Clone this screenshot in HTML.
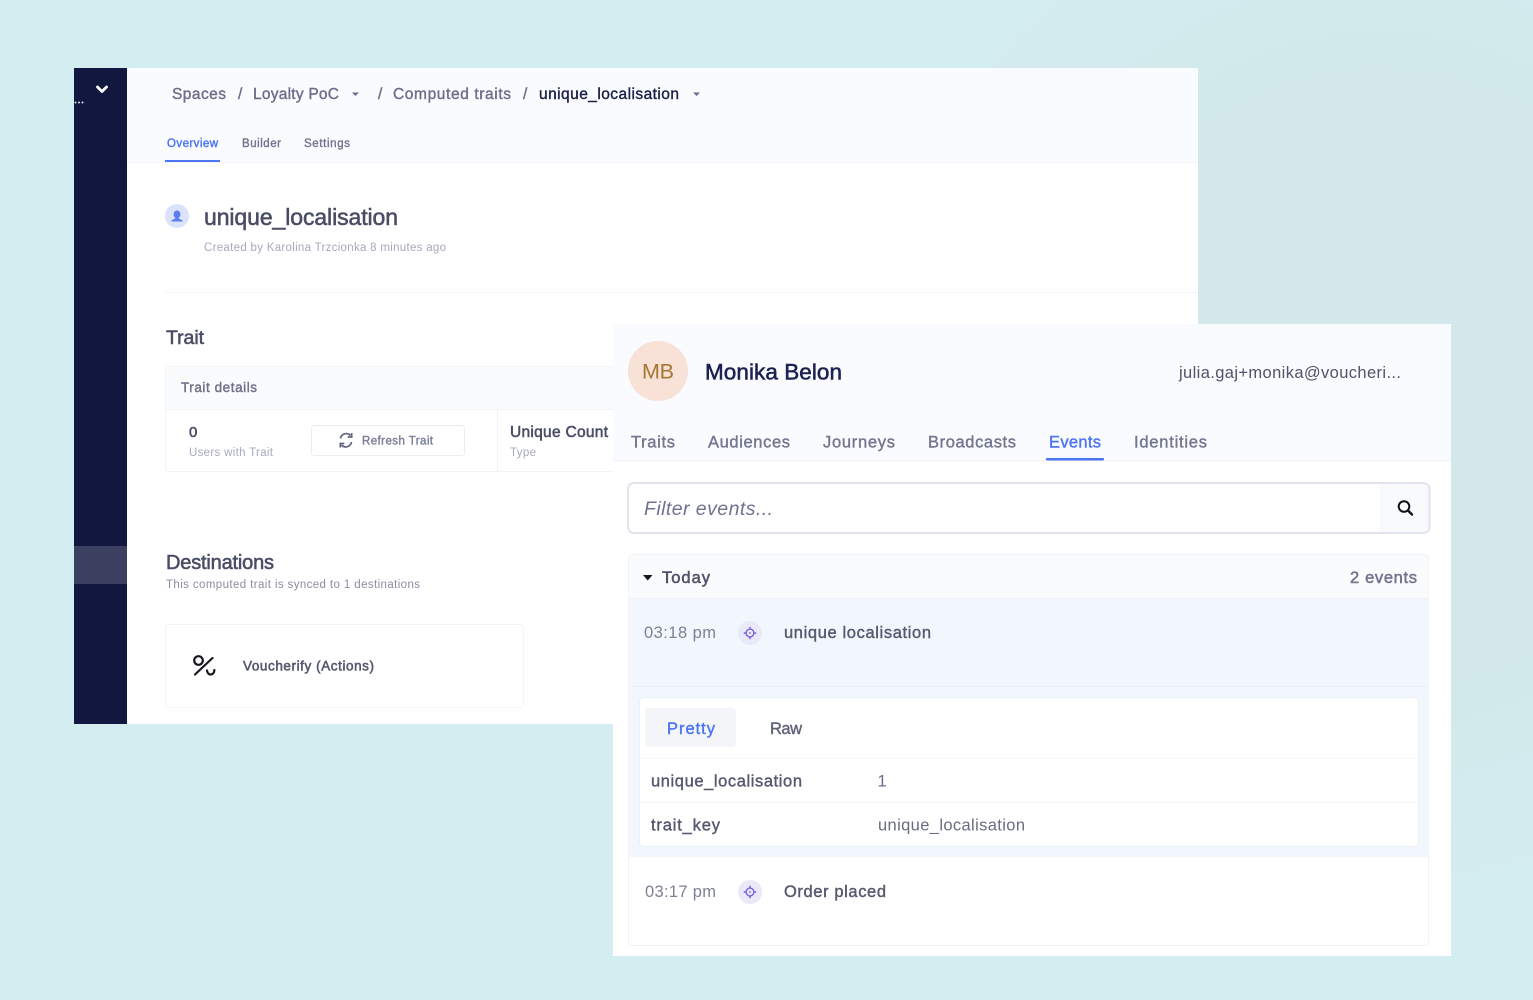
<!DOCTYPE html>
<html lang="en">
<head>
<meta charset="utf-8">
<title>Computed trait and customer events</title>
<style>
html,body{margin:0;padding:0;width:1533px;height:1000px;overflow:hidden;background:#d4edf1}
svg{display:block;position:absolute;left:0;top:0;filter:blur(.3px)}
text{font-family:"Liberation Sans",Arial,sans-serif;white-space:pre}
.m{stroke:currentColor;stroke-width:.4px}
.s{stroke:currentColor;stroke-width:.55px}
</style>
</head>
<body>
<svg width="1533" height="1000" viewBox="0 0 1533 1000" xmlns="http://www.w3.org/2000/svg">
<defs>
<radialGradient id="bg" cx="1380" cy="380" r="520" gradientUnits="userSpaceOnUse">
<stop offset="0" stop-color="#d2e8ea"/><stop offset=".55" stop-color="#d2e8ea"/><stop offset="1" stop-color="#d4edf1"/>
</radialGradient>
<g id="target" fill="none" stroke="#7a62dc" stroke-width="1.4">
<circle r="3.9"/><path d="M0-6.2V-3.6M0 3.6V6.2M-6.2 0H-3.6M3.6 0H6.2"/><circle r=".9" fill="#7a62dc" stroke="none"/>
</g>
</defs>

<rect width="1533" height="1000" fill="url(#bg)"/>

<!-- Back panel -->
<rect x="74" y="68" width="1124" height="656" fill="#fff"/>
<rect x="74" y="68" width="53" height="656" fill="#11173f"/>
<rect x="74" y="546" width="53" height="38" fill="#3c4060"/>
<path d="M97.500 87 102 91.500 106.500 87" fill="none" stroke="#fff" stroke-width="2.800" stroke-linecap="round" stroke-linejoin="round"/>
<g fill="#dfe1ea"><circle cx="75.500" cy="102.500" r="1"/><circle cx="79" cy="102.500" r="1"/><circle cx="82.500" cy="102.500" r="1"/></g>

<rect x="127" y="68" width="1071" height="94" fill="#f9fbfe"/>
<rect x="127" y="162" width="1071" height="1" fill="#f4f6f9"/>

<g font-size="15.500" fill="#6c6f8b" color="#6c6f8b">
<text class="m" x="172" y="99" textLength="54">Spaces</text>
<text class="m" x="238" y="99">/</text>
<text class="m" x="253" y="99" textLength="86">Loyalty PoC</text>
<path d="M352 92.500h7l-3.500 3.500z" stroke="none"/>
<text class="m" x="378" y="99">/</text>
<text class="m" x="393" y="99" textLength="118">Computed traits</text>
<text class="m" x="523" y="99">/</text>
</g>
<text class="m" x="539" y="99" font-size="15.500" fill="#1d2148" color="#1d2148" textLength="140">unique_localisation</text>
<path d="M693 92.500h7l-3.500 3.500z" fill="#6c6f8b"/>

<g font-size="11.500">
<text class="m" x="167" y="147" fill="#4c74f4" color="#4c74f4" textLength="51">Overview</text>
<text class="m" x="242" y="147" fill="#737690" color="#737690" textLength="39">Builder</text>
<text class="m" x="304" y="147" fill="#737690" color="#737690" textLength="46">Settings</text>
</g>
<rect x="165" y="160" width="55" height="2" fill="#4c74f4"/>

<circle cx="177" cy="216" r="12" fill="#dbe2fb"/>
<path d="M177 210.500a3.400 3.700 0 0 1 3.400 3.700c0 1.800-.9 3.100-1.700 3.700v.9c1.700.4 4 1.100 4 2.700h-11.400c0-1.600 2.300-2.300 4-2.700v-.9c-.8-.6-1.700-1.900-1.700-3.700a3.400 3.700 0 0 1 3.400-3.700z" fill="#5b7df1"/>
<text class="s" x="204" y="225" font-size="23" fill="#4a4d65" color="#4a4d65" textLength="194">unique_localisation</text>
<text x="204" y="251" font-size="11.500" fill="#a6a9be" textLength="242">Created by Karolina Trzcionka 8 minutes ago</text>
<rect x="165" y="292" width="1033" height="1" fill="#f3f4f7"/>

<text class="s" x="166" y="344" font-size="19.500" fill="#4a4d65" color="#4a4d65" textLength="38">Trait</text>

<rect x="165.500" y="366.500" width="460" height="105" rx="3" fill="#fff" stroke="#f3f4f7"/>
<path d="M166 409V370a3 3 0 0 1 3-3H625V409z" fill="#f9fbfc"/>
<rect x="166" y="409" width="460" height="1" fill="#f2f3f6"/>
<text class="m" x="181" y="392" font-size="13.500" fill="#6d7089" color="#6d7089" textLength="76">Trait details</text>
<text class="s" x="189" y="437" font-size="15" fill="#4a4d65" color="#4a4d65">0</text>
<text x="189" y="456" font-size="11.500" fill="#a6a9be" textLength="84">Users with Trait</text>
<rect x="311.500" y="425.500" width="153" height="30" rx="3" fill="#fff" stroke="#ebecf1"/>
<g fill="none" stroke="#62657f" stroke-width="1.700">
<path d="M340.500 438.500a5.800 5.800 0 0 1 10-3"/><path d="M351.500 442a5.800 5.800 0 0 1-10 3"/>
<path d="M351.700 433v4h-4M340.300 447.500v-4h4"/>
</g>
<text class="m" x="362" y="444.500" font-size="11.500" fill="#7b7e96" color="#7b7e96" textLength="71">Refresh Trait</text>
<rect x="497" y="410" width="1" height="61" fill="#f1f2f5"/>
<text class="s" x="510" y="437" font-size="15.500" fill="#4a4d65" color="#4a4d65" textLength="98">Unique Count</text>
<text x="510" y="456" font-size="11.500" fill="#a6a9be" textLength="26">Type</text>

<text class="s" x="166" y="569" font-size="20" fill="#4a4d65" color="#4a4d65" textLength="108">Destinations</text>
<text x="166" y="588" font-size="11.500" fill="#8a8da3" textLength="254">This computed trait is synced to 1 destinations</text>
<rect x="165.500" y="624.500" width="358" height="83" rx="3" fill="#fff" stroke="#f3f4f7"/>
<g fill="none" stroke="#17171f" stroke-width="2.200" stroke-linecap="round">
<circle cx="198.500" cy="660.500" r="4.300"/>
<path d="M195 674.500 212.500 658"/>
<path d="M207 670.500c.3 2.500 1.800 4 3.700 4s3.500-1.500 3.700-4.500"/>
</g>
<text class="s" x="243" y="670.500" font-size="13.500" fill="#55586f" color="#55586f" textLength="131">Voucherify (Actions)</text>

<!-- Front panel -->
<rect x="613" y="324" width="838" height="632" fill="#fff"/>
<rect x="613" y="324" width="838" height="136" fill="#f9fbfe"/>
<rect x="613" y="460" width="838" height="1" fill="#f0f2f6"/>
<circle cx="658" cy="371" r="30" fill="#f8e1d6"/>
<text x="642" y="378.500" font-size="21.500" fill="#a57630" textLength="32">MB</text>
<text class="s" x="705" y="379.500" font-size="22.500" fill="#1b2050" color="#1b2050" textLength="137">Monika Belon</text>
<text x="1179" y="378" font-size="16.500" fill="#50536a" textLength="222">julia.gaj+monika@voucheri...</text>

<g font-size="16.500" fill="#73768f" color="#73768f">
<text class="m" x="631" y="447.500" textLength="44">Traits</text>
<text class="m" x="708" y="447.500" textLength="82">Audiences</text>
<text class="m" x="823" y="447.500" textLength="72">Journeys</text>
<text class="m" x="928" y="447.500" textLength="88">Broadcasts</text>
<text class="m" x="1134" y="447.500" textLength="73">Identities</text>
</g>
<text class="m" x="1049" y="447.500" font-size="16.500" fill="#4c74f4" color="#4c74f4" textLength="52">Events</text>
<rect x="1046" y="458" width="58" height="2.500" rx="1" fill="#4c74f4"/>

<rect x="628" y="483" width="801.500" height="50" rx="6" fill="#fff" stroke="#e2e3ec" stroke-width="2"/>
<path d="M1380 484h42.500a6 6 0 0 1 6 6v36a6 6 0 0 1-6 6h-42.500z" fill="#f9fafc"/>
<text x="644" y="515" font-size="19.500" font-style="italic" fill="#6e7290" textLength="129">Filter events...</text>
<circle cx="1404" cy="506.500" r="5.300" fill="none" stroke="#10121c" stroke-width="2"/>
<path d="M1408 510.500 1412 514.500" stroke="#10121c" stroke-width="2.400" stroke-linecap="round"/>

<rect x="628.500" y="554.500" width="800" height="391" rx="4" fill="#fff" stroke="#f0f2f5"/>
<path d="M629 598V559a4 4 0 0 1 4-4H1424a4 4 0 0 1 4 4V598z" fill="#f9fbfd"/>
<rect x="629" y="598" width="799" height="1" fill="#eef1f6"/>
<rect x="629" y="599" width="799" height="258" fill="#f2f6fd"/>
<path d="M643 575h9.500l-4.750 5.500z" fill="#14151f"/>
<text class="s" x="662" y="583" font-size="16.500" fill="#50536a" color="#50536a" textLength="48">Today</text>
<text class="s" x="1350" y="583" font-size="16.500" fill="#73768f" color="#73768f" textLength="67">2 events</text>

<text x="644" y="638" font-size="16.500" fill="#7d8095" textLength="72">03:18 pm</text>
<circle cx="750" cy="633" r="12" fill="#e9e9f9"/>
<use href="#target" x="750" y="633"/>
<text class="m" x="784" y="638" font-size="16.500" fill="#55586f" color="#55586f" textLength="147">unique localisation</text>
<rect x="632" y="686" width="796" height="1" fill="#ebeff7"/>

<rect x="639.500" y="697.500" width="779" height="149" rx="4" fill="#fff" stroke="#ebeff6"/>
<rect x="645" y="708" width="91" height="39" rx="4" fill="#f3f5f9"/>
<text class="m" x="667" y="734" font-size="16.500" fill="#4c74f4" color="#4c74f4" textLength="48">Pretty</text>
<text class="m" x="770" y="734" font-size="16.500" fill="#5f6278" color="#5f6278" textLength="32">Raw</text>
<rect x="640" y="758" width="778" height="1" fill="#f5f6fa"/>
<rect x="640" y="802" width="778" height="1" fill="#f5f6fa"/>
<text class="m" x="651" y="786.500" font-size="16.500" fill="#55586f" color="#55586f" textLength="151">unique_localisation</text>
<text x="877.500" y="786.500" font-size="16.500" fill="#696c83">1</text>
<text class="m" x="651" y="830.500" font-size="16.500" fill="#55586f" color="#55586f" textLength="69">trait_key</text>
<text x="878" y="830.500" font-size="16.500" fill="#696c83" textLength="147">unique_localisation</text>

<text x="645" y="897" font-size="16.500" fill="#7d8095" textLength="71">03:17 pm</text>
<circle cx="750" cy="892" r="12" fill="#e9e9f9"/>
<use href="#target" x="750" y="892"/>
<text class="m" x="784" y="897" font-size="16.500" fill="#55586f" color="#55586f" textLength="102">Order placed</text>
</svg>
</body>
</html>
